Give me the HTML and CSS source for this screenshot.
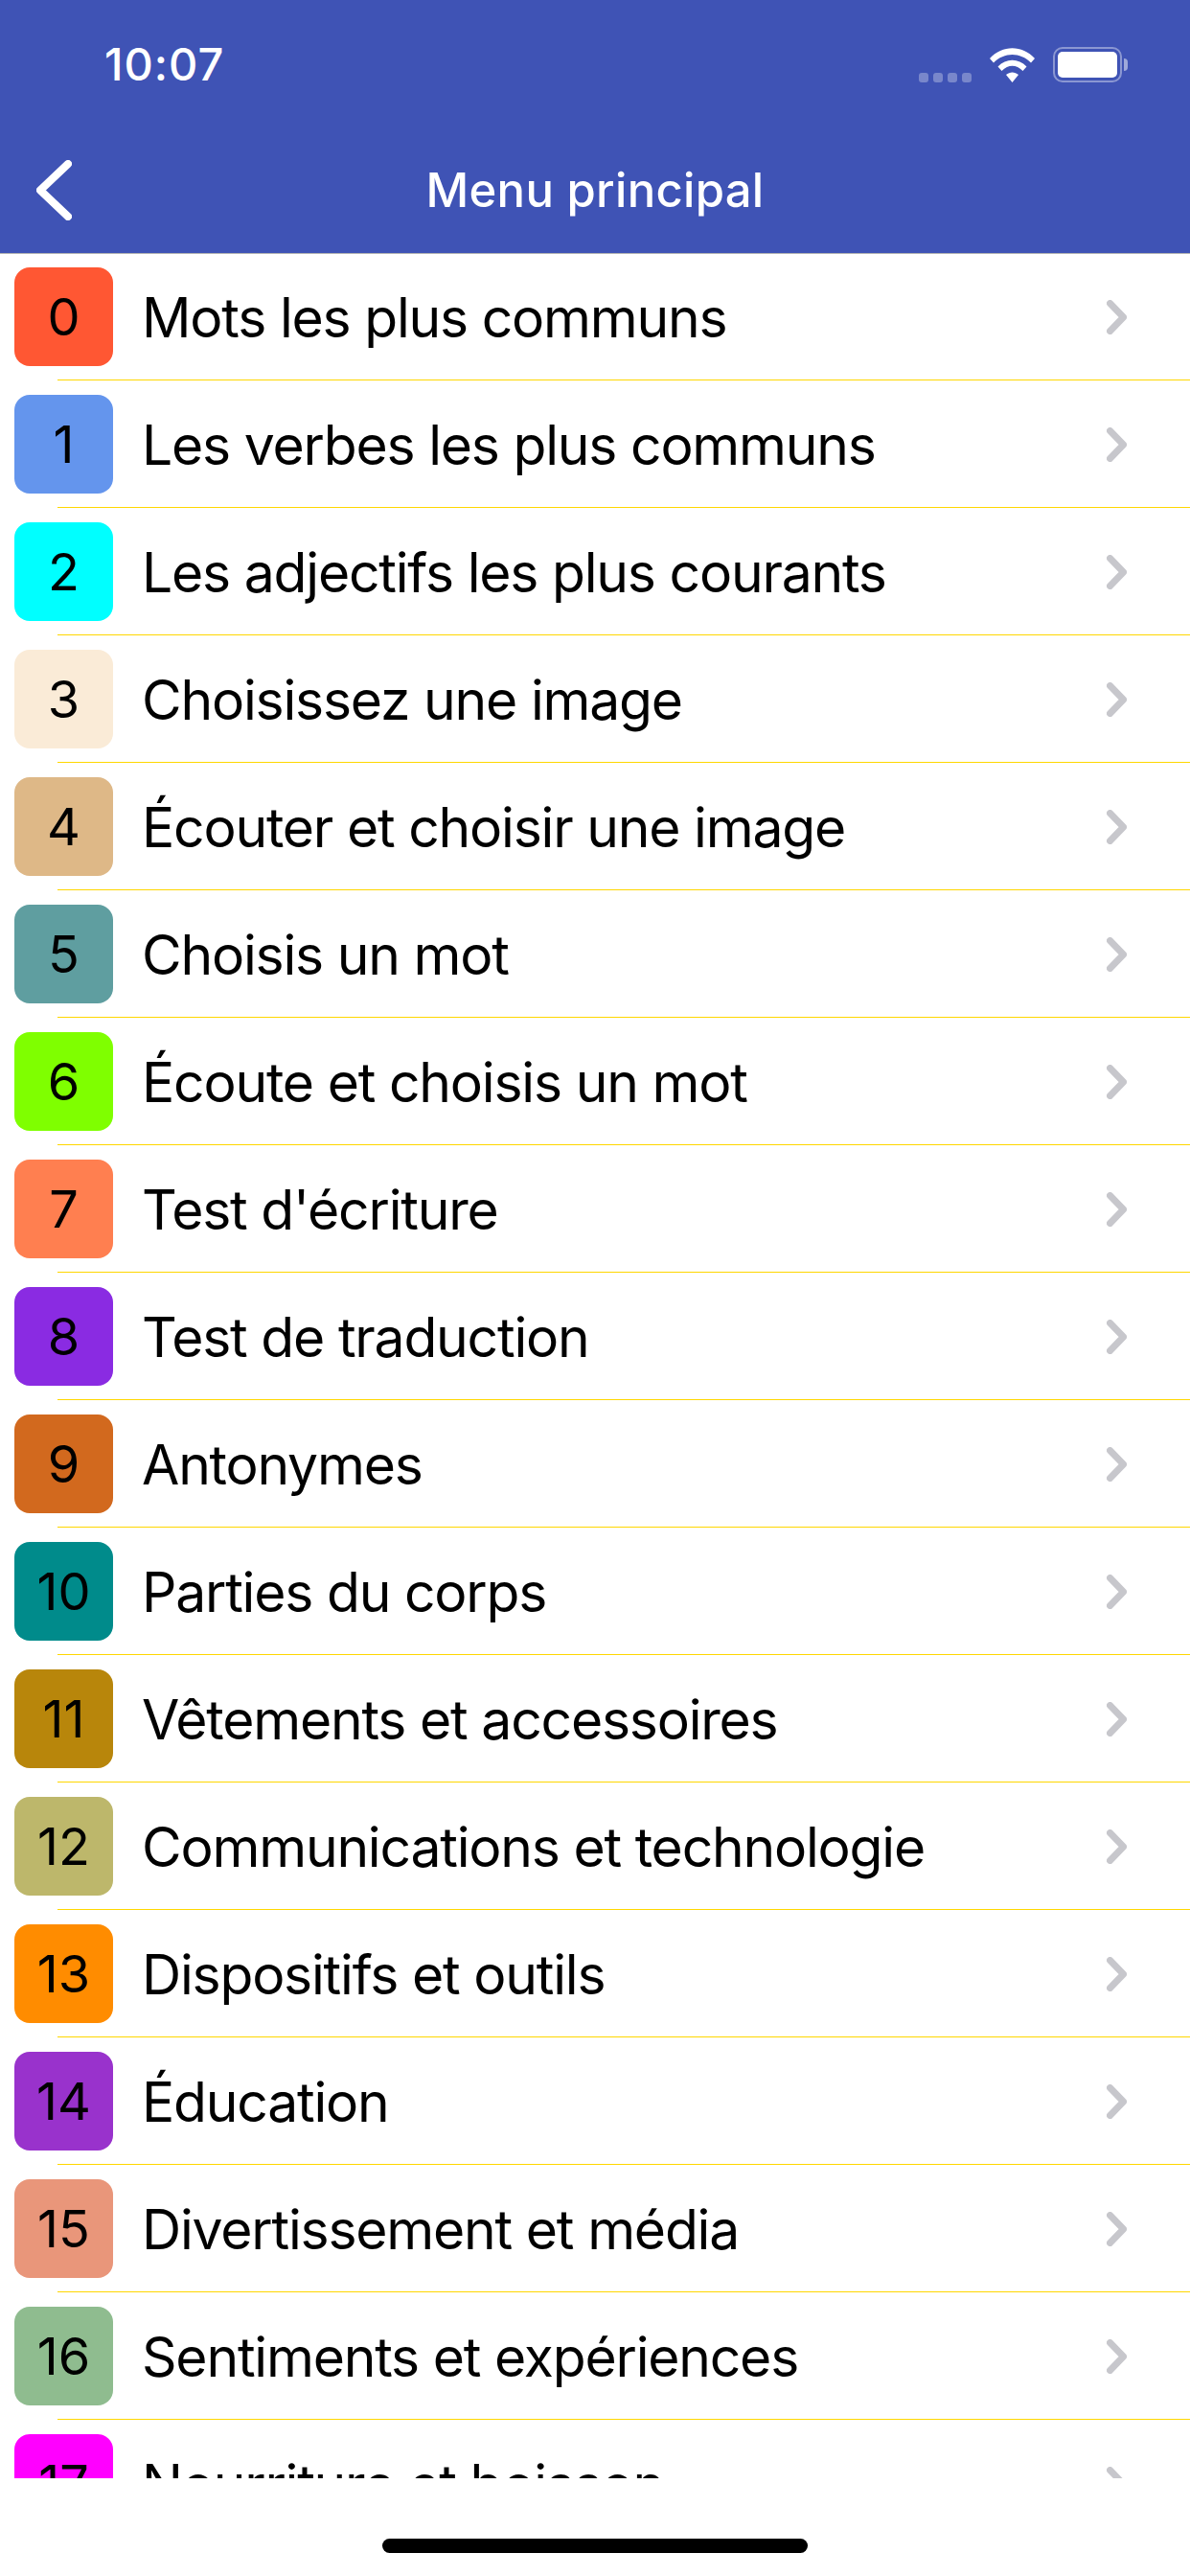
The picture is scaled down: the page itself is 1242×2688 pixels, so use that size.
FILE: index.html
```html
<!DOCTYPE html>
<html lang="fr">
<head>
    <meta charset="UTF-8">
    <meta name="viewport" content="width=device-width, initial-scale=1.0">
    <title>Menu principal</title>
    <link rel="stylesheet" href="styles.css">
</head>
<body>
    <svg class="defs" width="0" height="0">
        <symbol id="chevron" viewBox="0 0 21 36">
            <path d="M3.5 3.5 L17.5 18 L3.5 32.5" fill="none" stroke="#c7c7cc" stroke-width="7" stroke-linecap="round" stroke-linejoin="round"/>
        </symbol>
    </svg>

    <header class="topbar">
        <div class="status">
            <span class="time">10:07</span>
            <div class="status-icons">
                <div class="signal"><i></i><i></i><i></i><i></i></div>
                <svg class="wifi" width="47" height="36" viewBox="0 0 47 36">
                    <path d="M0 11 C13 -3.5 34 -3.5 47 11 L43 15.5 C32 4 15 4 4 15.5 Z" fill="#fff"/>
                    <path d="M8.500 19.500 C17 10.500 30 10.500 38.500 19.500 L34.500 24 C27.500 17 19.500 17 12.500 24 Z" fill="#fff"/>
                    <path d="M17 28 C21 24.500 26 24.500 30 28 L23.500 36 Z" fill="#fff"/>
                </svg>
                <div class="battery">
                    <div class="battery-body"><div class="battery-fill"></div></div>
                    <div class="battery-cap"></div>
                </div>
            </div>
        </div>
        <nav class="navbar">
            <svg class="back" width="37" height="63" viewBox="0 0 37 63">
                <path d="M33 4 L4 31.500 L33 59" fill="none" stroke="#fff" stroke-width="8" stroke-linecap="round" stroke-linejoin="round"/>
            </svg>
            <h1 class="title">Menu principal</h1>
        </nav>
    </header>

    <ul class="menu">
        <li class="row"><span class="tile c0">0</span><span class="label">Mots les plus communs</span><svg class="arrow"><use href="#chevron"/></svg></li>
        <li class="row"><span class="tile c1">1</span><span class="label">Les verbes les plus communs</span><svg class="arrow"><use href="#chevron"/></svg></li>
        <li class="row"><span class="tile c2">2</span><span class="label">Les adjectifs les plus courants</span><svg class="arrow"><use href="#chevron"/></svg></li>
        <li class="row"><span class="tile c3">3</span><span class="label">Choisissez une image</span><svg class="arrow"><use href="#chevron"/></svg></li>
        <li class="row"><span class="tile c4">4</span><span class="label">Écouter et choisir une image</span><svg class="arrow"><use href="#chevron"/></svg></li>
        <li class="row"><span class="tile c5">5</span><span class="label">Choisis un mot</span><svg class="arrow"><use href="#chevron"/></svg></li>
        <li class="row"><span class="tile c6">6</span><span class="label">Écoute et choisis un mot</span><svg class="arrow"><use href="#chevron"/></svg></li>
        <li class="row"><span class="tile c7">7</span><span class="label">Test d'écriture</span><svg class="arrow"><use href="#chevron"/></svg></li>
        <li class="row"><span class="tile c8">8</span><span class="label">Test de traduction</span><svg class="arrow"><use href="#chevron"/></svg></li>
        <li class="row"><span class="tile c9">9</span><span class="label">Antonymes</span><svg class="arrow"><use href="#chevron"/></svg></li>
        <li class="row"><span class="tile c10">10</span><span class="label">Parties du corps</span><svg class="arrow"><use href="#chevron"/></svg></li>
        <li class="row"><span class="tile c11">11</span><span class="label">Vêtements et accessoires</span><svg class="arrow"><use href="#chevron"/></svg></li>
        <li class="row"><span class="tile c12">12</span><span class="label">Communications et technologie</span><svg class="arrow"><use href="#chevron"/></svg></li>
        <li class="row"><span class="tile c13">13</span><span class="label">Dispositifs et outils</span><svg class="arrow"><use href="#chevron"/></svg></li>
        <li class="row"><span class="tile c14">14</span><span class="label">Éducation</span><svg class="arrow"><use href="#chevron"/></svg></li>
        <li class="row"><span class="tile c15">15</span><span class="label">Divertissement et média</span><svg class="arrow"><use href="#chevron"/></svg></li>
        <li class="row"><span class="tile c16">16</span><span class="label">Sentiments et expériences</span><svg class="arrow"><use href="#chevron"/></svg></li>
        <li class="row"><span class="tile c17">17</span><span class="label">Nourriture et boisson</span><svg class="arrow"><use href="#chevron"/></svg></li>
    </ul>

    <footer class="home-area">
        <div class="home-bar"></div>
    </footer>
</body>
</html>
```

FILE: styles.css
```css
html, body {
    margin: 0;
    padding: 0;
}
body {
    width: 1242px;
    height: 2688px;
    display: flex;
    flex-direction: column;
    overflow: hidden;
    background-color: white;
    font-family: Inter, "Liberation Sans", sans-serif;
    color: black;
}
.defs {
    display: none;
}

/* top blue part */
.topbar {
    height: 264px;
    background-color: #3f53b5;
    border-bottom: 1px solid #b2b2b2;
    flex-shrink: 0;
}
.status {
    height: 132px;
    display: flex;
    justify-content: space-between;
    align-items: flex-start;
    padding: 0 65px 0 109px;
}
.time {
    margin-top: 46px;
    font-size: 47px;
    line-height: 42px;
    font-weight: 500;
    letter-spacing: 1px;
    color: white;
}
.status-icons {
    display: flex;
    align-items: flex-end;
    margin-top: 49px;
}
.signal {
    display: flex;
    gap: 5px;
    margin-right: 19px;
}
.signal i {
    width: 10px;
    height: 10px;
    border-radius: 3px;
    background-color: rgba(255, 255, 255, 0.3);
}
.wifi {
    margin-right: 19px;
}
.battery {
    display: flex;
    align-items: center;
    gap: 2px;
}
.battery-body {
    width: 72px;
    height: 37px;
    box-sizing: border-box;
    padding: 3px;
    border: 2px solid rgba(255, 255, 255, 0.4);
    border-radius: 10px;
}
.battery-fill {
    height: 100%;
    background-color: white;
    border-radius: 5px;
}
.battery-cap {
    width: 4px;
    height: 13px;
    background-color: rgba(255, 255, 255, 0.5);
    border-radius: 0 4px 4px 0;
}
.navbar {
    height: 132px;
    position: relative;
    display: flex;
    align-items: center;
    justify-content: center;
}
.back {
    position: absolute;
    left: 38px;
    top: 35px;
}
.title {
    margin: 0;
    font-size: 49px;
    font-weight: 500;
    letter-spacing: 0.3px;
    color: white;
}

/* list */
.menu {
    list-style: none;
    margin: -1px 0 0;
    padding: 0;
    flex: 1;
    overflow: hidden;
}
.row {
    height: 133px;
    box-sizing: border-box;
    position: relative;
    display: flex;
    align-items: center;
    padding: 15px 66px 15px 15px;
}
.row::after {
    content: "";
    position: absolute;
    left: 60px;
    right: 0;
    bottom: 0;
    height: 1px;
    background-color: #ffd700;
}
.tile {
    width: 103px;
    height: 103px;
    flex-shrink: 0;
    border-radius: 16px;
    display: flex;
    align-items: center;
    justify-content: center;
    font-size: 54px;
}
.label {
    flex: 1;
    margin-left: 30px;
    padding-top: 2px;
    font-size: 57px;
    letter-spacing: -1.2px;
    white-space: nowrap;
}
.arrow {
    width: 21px;
    height: 36px;
    flex-shrink: 0;
}

.c0 { background-color: #ff5733; }
.c1 { background-color: cornflowerblue; }
.c2 { background-color: cyan; }
.c3 { background-color: antiquewhite; }
.c4 { background-color: burlywood; }
.c5 { background-color: cadetblue; }
.c6 { background-color: chartreuse; }
.c7 { background-color: coral; }
.c8 { background-color: blueviolet; }
.c9 { background-color: chocolate; }
.c10 { background-color: darkcyan; }
.c11 { background-color: darkgoldenrod; }
.c12 { background-color: darkkhaki; }
.c13 { background-color: darkorange; }
.c14 { background-color: darkorchid; }
.c15 { background-color: darksalmon; }
.c16 { background-color: darkseagreen; }
.c17 { background-color: magenta; }

/* bottom strip with the home bar */
.home-area {
    height: 102px;
    flex-shrink: 0;
    box-sizing: border-box;
    padding-top: 63px;
    background-color: white;
    display: flex;
    justify-content: center;
    align-items: flex-start;
}
.home-bar {
    width: 444px;
    height: 15px;
    border-radius: 8px;
    background-color: black;
}
```
